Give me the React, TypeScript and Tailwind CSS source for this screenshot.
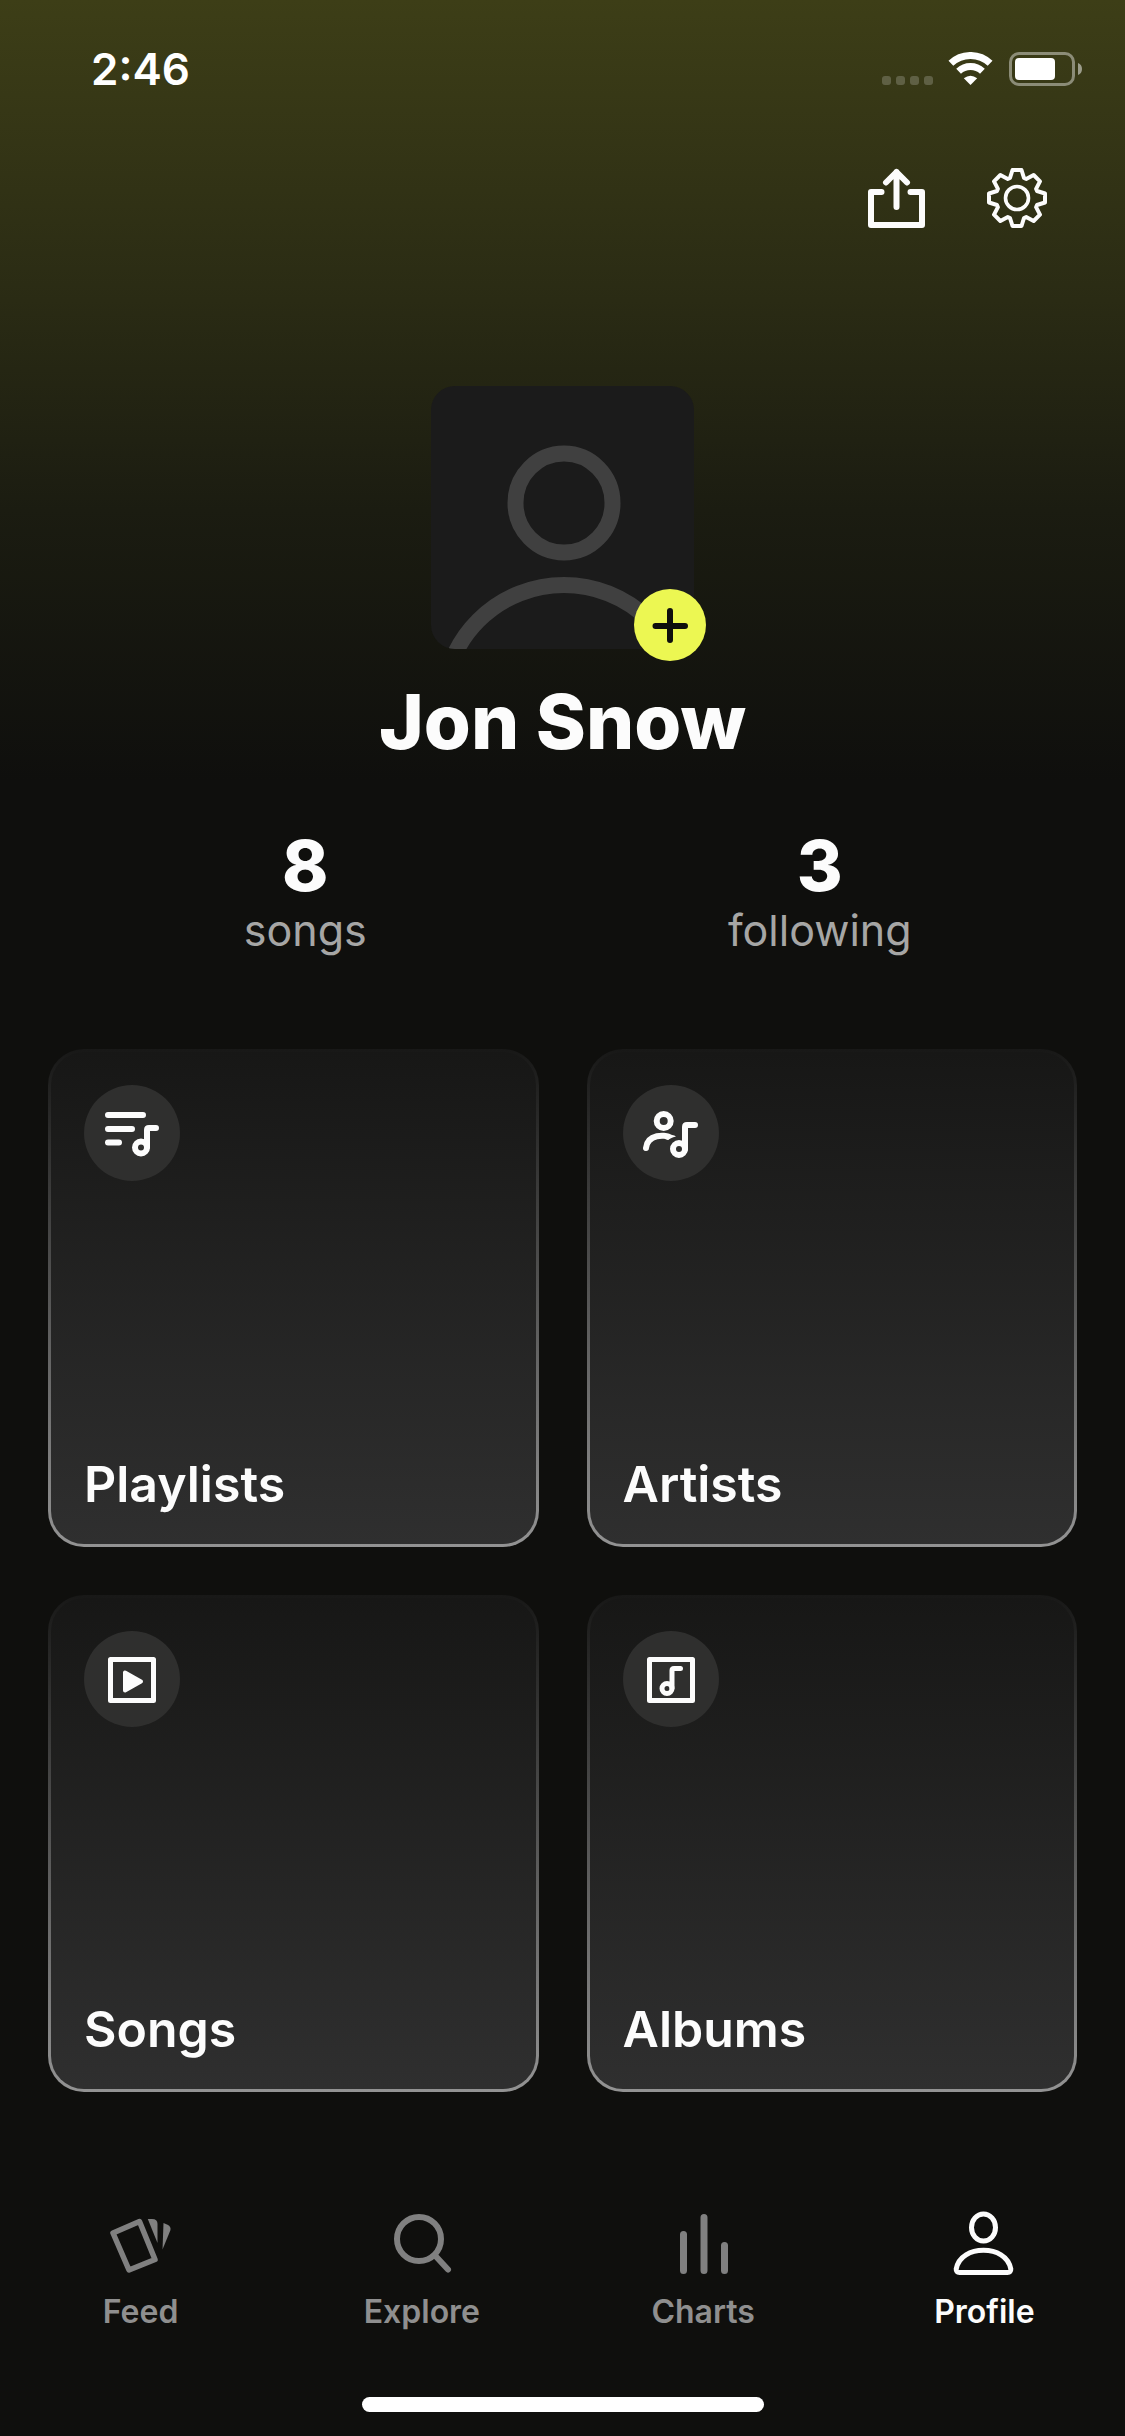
import React from "react";

const TOOTH: [number, number][] = [
  [-7, -20],
  [-4.5, -28],
  [4.5, -28],
  [7, -20],
];

const gearPoints = Array.from({ length: 8 }, (_, k) => {
  const a = (k * Math.PI) / 4;
  return TOOTH.map(
    ([x, y]) =>
      `${(30 + x * Math.cos(a) - y * Math.sin(a)).toFixed(2)},${(30 + x * Math.sin(a) + y * Math.cos(a)).toFixed(2)}`
  ).join(" ");
}).join(" ");

function StatusBar() {
  return (
    <div className="flex h-[34px] items-center justify-between pl-[91px] pr-[42px]">
      <span className="text-[44px] leading-[34px] font-semibold text-white">2:46</span>
      <div className="flex items-end">
        <div className="mb-px flex gap-[5px]">
          {[0, 1, 2, 3].map((i) => (
            <span key={i} className="size-[9px] rounded-[3px] bg-white/20" />
          ))}
        </div>
        <svg className="mb-px ml-[15px] h-[33px] w-[45px]" viewBox="0 0 45 33" fill="none" aria-hidden="true">
          <path d="M2.9 11.3A28.5 28.5 0 0 1 42.1 11.3" stroke="#fff" strokeWidth="7" />
          <path d="M10.6 19.2A17.5 17.5 0 0 1 34.4 19.2" stroke="#fff" strokeWidth="7" />
          <path d="M15.8 26.3Q22.5 21 29.2 26.3L22.5 33Z" fill="#fff" />
        </svg>
        <svg className="ml-4 h-[34px] w-[74px]" viewBox="0 0 74 34" fill="none" aria-hidden="true">
          <rect x="1.5" y="1.5" width="63" height="31" rx="8.5" stroke="#fff" strokeOpacity="0.42" strokeWidth="3" />
          <rect x="6" y="6" width="40" height="22" rx="4" fill="#fff" />
          <path d="M69 11Q73 12.5 73 17T69 23Z" fill="#fff" fillOpacity="0.5" />
        </svg>
      </div>
    </div>
  );
}

function ShareIcon() {
  return (
    <svg className="size-[60px]" viewBox="0 0 60 60" fill="none" stroke="#fcfcfc" strokeWidth="6" strokeLinecap="round" strokeLinejoin="round" aria-hidden="true">
      <path d="M14.5 24H4V57H55V24H43.5" />
      <path d="M29.5 39V4M19 14.5L29.5 4L40 14.5" />
    </svg>
  );
}

function GearIcon() {
  return (
    <svg className="size-[60px]" viewBox="0 0 60 60" fill="none" stroke="#fcfcfc" strokeLinejoin="round" aria-hidden="true">
      <polygon points={gearPoints} strokeWidth="4" />
      <circle cx="30" cy="30" r="11.5" strokeWidth="3.6" />
    </svg>
  );
}

function Avatar() {
  return (
    <div className="relative mx-auto size-[263px]">
      <svg className="size-full rounded-3xl bg-[#1b1b1b]" viewBox="0 0 263 263" fill="none" stroke="#404040" strokeWidth="16" role="img" aria-label="Jon Snow">
        <ellipse cx="133" cy="117" rx="48.5" ry="49.5" />
        <circle cx="133" cy="320" r="121" />
      </svg>
      <button
        type="button"
        aria-label="Add photo"
        className="absolute -right-3 -bottom-3 flex size-[72px] items-center justify-center rounded-full bg-[#ecf752]"
      >
        <svg className="size-9" viewBox="0 0 36 36" fill="none" stroke="#0f0f0d" strokeWidth="6" strokeLinecap="round" aria-hidden="true">
          <path d="M18 4V33M3.5 19H33" />
        </svg>
      </button>
    </div>
  );
}

function Stat({ value, label }: { value: string; label: string }) {
  return (
    <a href="#" className="flex flex-col items-center">
      <span className="text-[70px] leading-[64px] font-extrabold text-[#fcfcfc]">{value}</span>
      <span className="mt-2 text-[43px] leading-[48px] text-[#a6a6a5]">{label}</span>
    </a>
  );
}

const stroke = {
  fill: "none",
  stroke: "#fcfcfc",
  strokeWidth: 6,
  strokeLinecap: "round",
  strokeLinejoin: "round",
} as const;

const tiles = [
  {
    label: "Playlists",
    icon: (
      <g {...stroke}>
        <path d="M24 30H59M24 44H48M24 57.5H35" />
        <path d="M63 62V45Q63 43 65 43H72" />
        <circle cx="57" cy="62.5" r="6" />
      </g>
    ),
  },
  {
    label: "Artists",
    icon: (
      <g {...stroke}>
        <circle cx="40.7" cy="36" r="7" />
        <path d="M23 63C24.5 48 43 50.5 45 51.5" />
        <path d="M44 49Q50 49.5 53 51.5Q47 53 45 55L42 54Z" fill="#fcfcfc" stroke="none" />
        <path d="M62 64V42Q62 40 64 40H72" />
        <circle cx="56" cy="64" r="6" />
      </g>
    ),
  },
  {
    label: "Songs",
    icon: (
      <g {...stroke} strokeWidth={5}>
        <path d="M26.5 28.5H69.5V69.5H26.5Z" />
        <path d="M41 41.5V59.5L57 50.5Z" fill="#fcfcfc" strokeWidth={4} />
      </g>
    ),
  },
  {
    label: "Albums",
    icon: (
      <g {...stroke} strokeWidth={5}>
        <path d="M26.5 28.5H69.5V69.5H26.5Z" />
        <path d="M49 57V39.5Q49 37.5 51 37.5H57.5" />
        <circle cx="44" cy="57.5" r="5" />
      </g>
    ),
  },
];

function Tile({ label, icon }: { label: string; icon: React.ReactNode }) {
  return (
    <a
      href="#"
      className="flex aspect-[490/497] flex-col justify-between rounded-[36px] border-3 border-transparent [background:linear-gradient(#171716,#2f2f2f)_padding-box,linear-gradient(#181817,#939393)_border-box] px-[33px] pt-[33px] pb-[30px]"
    >
      <svg className="size-24 rounded-full bg-[#2f2f2e]" viewBox="0 0 96 96" aria-hidden="true">
        {icon}
      </svg>
      <span className="text-[50px] leading-[60px] font-semibold text-[#fcfcfc]">{label}</span>
    </a>
  );
}

const tabs = [
  {
    label: "Feed",
    icon: (
      <>
        <path d="M8 25L34.5 13.5L50 51.5L24 62Z" fill="none" stroke="currentColor" strokeWidth="5.5" strokeLinejoin="round" />
        <path d="M42.8 11H47Q52.5 11 52.5 16V35Z" fill="currentColor" />
        <path d="M58.5 15L62.5 16.8Q66.5 18.8 65.3 22.5L57.5 41.5Z" fill="currentColor" />
      </>
    ),
  },
  {
    label: "Explore",
    icon: (
      <g fill="none" stroke="currentColor" strokeWidth="6" strokeLinecap="round">
        <circle cx="33" cy="31" r="22" />
        <path d="M49.5 48L62 61.5" />
      </g>
    ),
  },
  {
    label: "Charts",
    icon: (
      <g stroke="currentColor" strokeWidth="7" strokeLinecap="round">
        <path d="M16.5 26.5V62.5M37 9.5V62.5M57.5 37.5V62.5" />
      </g>
    ),
  },
  {
    label: "Profile",
    active: true,
    icon: (
      <g fill="none" stroke="currentColor" strokeWidth="5">
        <ellipse cx="35.5" cy="19.5" rx="12" ry="13.5" />
        <path d="M11.5 64.5H59.5Q63 64.5 62.8 61C60.5 48 48 42.3 35.5 42.3S10.5 48 8.2 61Q8 64.5 11.5 64.5Z" />
      </g>
    ),
  },
];

export default function App() {
  return (
    <div className="flex min-h-screen flex-col bg-[#0f0f0d] bg-[linear-gradient(#3d3e17_0px,#2a2b14_300px,#1b1c11_510px,#0f0f0d_780px)] bg-no-repeat pt-[52px] pb-6 font-['Inter','Liberation_Sans',sans-serif] [font-optical-sizing:none]">
      <StatusBar />
      <header className="mt-[82px] flex justify-end gap-[60px] pr-[78px]">
        <button type="button" aria-label="Share">
          <ShareIcon />
        </button>
        <button type="button" aria-label="Settings">
          <GearIcon />
        </button>
      </header>
      <main className="mt-[158px] px-12">
        <Avatar />
        <h1 className="mt-8 text-center text-[76px] leading-[80px] font-extrabold text-[#fcfcfc]">Jon Snow</h1>
        <section className="mt-[73px] grid grid-cols-2">
          <Stat value="8" label="songs" />
          <Stat value="3" label="following" />
        </section>
        <section className="mt-[95px] grid grid-cols-2 gap-12">
          {tiles.map((t) => (
            <Tile key={t.label} label={t.label} icon={t.icon} />
          ))}
        </section>
      </main>
      <nav className="mt-auto grid grid-cols-4 pt-12">
        {tabs.map((t) => (
          <a
            key={t.label}
            href="#"
            aria-current={t.active ? "page" : undefined}
            className={`flex flex-col items-center ${t.active ? "text-[#fcfcfc]" : "text-[#808080]"}`}
          >
            <svg className="size-[72px]" viewBox="0 0 72 72" aria-hidden="true">
              {t.icon}
            </svg>
            <span className={`mt-3 text-[32px] leading-[40px] font-semibold ${t.active ? "text-[#fcfcfc]" : "text-[#8f8f8f]"}`}>
              {t.label}
            </span>
          </a>
        ))}
      </nav>
      <div className="mx-auto mt-[65px] h-[15px] w-[402px] rounded-full bg-white" />
    </div>
  );
}
